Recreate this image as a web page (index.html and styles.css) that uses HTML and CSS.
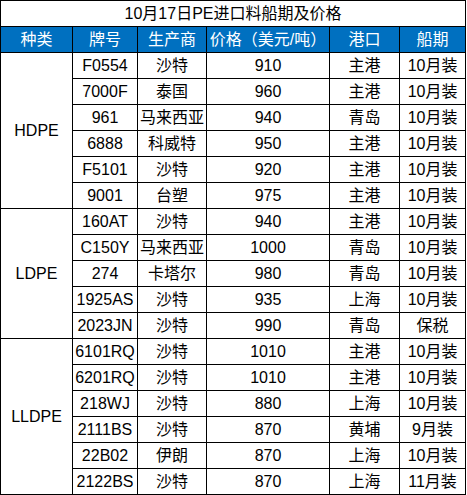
FILE: index.html
```html
<!DOCTYPE html>
<html lang="zh-CN">
<head>
  <meta charset="UTF-8">
  <meta name="viewport" content="width=device-width, initial-scale=1.0">
  <link rel="stylesheet" href="styles.css">
  <title>10月17日PE进口料船期及价格</title>
</head>
<body>
  <table class="price-table">
    <colgroup>
      <col class="col-type">
      <col class="col-grade">
      <col class="col-maker">
      <col class="col-price">
      <col class="col-port">
      <col class="col-ship">
    </colgroup>
    <tr class="title-row">
      <td colspan="6">10月17日PE进口料船期及价格</td>
    </tr>
    <tr class="head-row">
      <th>种类</th>
      <th>牌号</th>
      <th>生产商</th>
      <th>价格（美元/吨）</th>
      <th>港口</th>
      <th>船期</th>
    </tr>
    <tr>
      <td rowspan="6">HDPE</td>
      <td>F0554</td><td>沙特</td><td>910</td><td>主港</td><td>10月装</td>
    </tr>
    <tr><td>7000F</td><td>泰国</td><td>960</td><td>主港</td><td>10月装</td></tr>
    <tr><td>961</td><td>马来西亚</td><td>940</td><td>青岛</td><td>10月装</td></tr>
    <tr><td>6888</td><td>科威特</td><td>950</td><td>主港</td><td>10月装</td></tr>
    <tr><td>F5101</td><td>沙特</td><td>920</td><td>主港</td><td>10月装</td></tr>
    <tr><td>9001</td><td>台塑</td><td>975</td><td>主港</td><td>10月装</td></tr>
    <tr>
      <td rowspan="5">LDPE</td>
      <td>160AT</td><td>沙特</td><td>940</td><td>主港</td><td>10月装</td>
    </tr>
    <tr><td>C150Y</td><td>马来西亚</td><td>1000</td><td>青岛</td><td>10月装</td></tr>
    <tr><td>274</td><td>卡塔尔</td><td>980</td><td>青岛</td><td>10月装</td></tr>
    <tr><td>1925AS</td><td>沙特</td><td>935</td><td>上海</td><td>10月装</td></tr>
    <tr><td>2023JN</td><td>沙特</td><td>990</td><td>青岛</td><td>保税</td></tr>
    <tr>
      <td rowspan="6">LLDPE</td>
      <td>6101RQ</td><td>沙特</td><td>1010</td><td>主港</td><td>10月装</td>
    </tr>
    <tr><td>6201RQ</td><td>沙特</td><td>1010</td><td>主港</td><td>10月装</td></tr>
    <tr><td>218WJ</td><td>沙特</td><td>880</td><td>上海</td><td>10月装</td></tr>
    <tr><td>2111BS</td><td>沙特</td><td>870</td><td>黄埔</td><td>9月装</td></tr>
    <tr><td>22B02</td><td>伊朗</td><td>870</td><td>上海</td><td>10月装</td></tr>
    <tr><td>2122BS</td><td>沙特</td><td>870</td><td>上海</td><td>11月装</td></tr>
  </table>
</body>
</html>
```

FILE: styles.css
```css
body {
  margin: 0;
  background-color: #fff;
  color: #000;
  font-family: "Liberation Sans", "Noto Sans CJK SC", sans-serif;
  font-size: 16px;
}

.price-table {
  width: 466px;
  table-layout: fixed;
  border-collapse: collapse;
}

.col-type { width: 72px; }
.col-grade { width: 65px; }
.col-maker { width: 69px; }
.col-price { width: 123px; }
.col-port { width: 70px; }
.col-ship { width: 66px; }

.price-table td,
.price-table th {
  height: 25px;
  padding: 0;
  border: 1px solid #000;
  text-align: center;
  vertical-align: middle;
  font-weight: normal;
  white-space: nowrap;
  line-height: 1;
}

.head-row th {
  background-color: #0070c0;
  color: #fff;
}
```
